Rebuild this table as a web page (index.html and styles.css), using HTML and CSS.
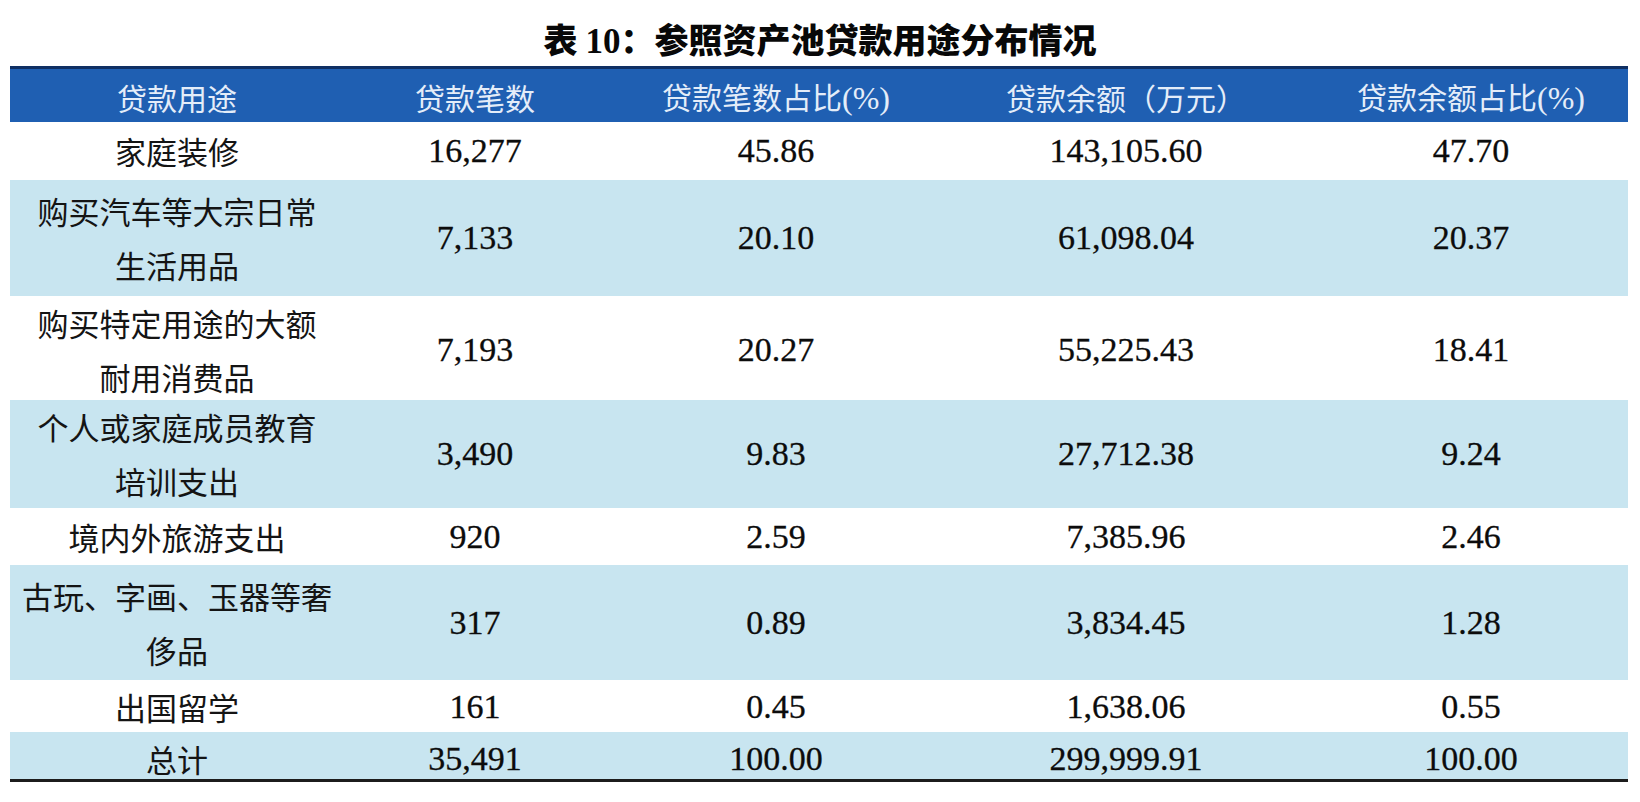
FILE: index.html
```html
<!DOCTYPE html>
<html lang="zh-CN">
<head>
<meta charset="utf-8">
<title>表10：参照资产池贷款用途分布情况</title>
<link rel="stylesheet" href="styles.css">
</head>
<body>
<div class="page">
  <h1 class="title">表 <span class="num">10</span>：参照资产池贷款用途分布情况</h1>
  <div class="table">
    <div class="row head">
      <div class="cell c1">贷款用途</div>
      <div class="cell c2">贷款笔数</div>
      <div class="cell c3">贷款笔数占比<span class="num">(%)</span></div>
      <div class="cell c4">贷款余额（万元）</div>
      <div class="cell c5">贷款余额占比<span class="num">(%)</span></div>
    </div>
    <div class="row r1">
      <div class="cell c1">家庭装修</div>
      <div class="cell c2 num">16,277</div>
      <div class="cell c3 num">45.86</div>
      <div class="cell c4 num">143,105.60</div>
      <div class="cell c5 num">47.70</div>
    </div>
    <div class="row r2 shade">
      <div class="cell c1">购买汽车等大宗日常<br>生活用品</div>
      <div class="cell c2 num">7,133</div>
      <div class="cell c3 num">20.10</div>
      <div class="cell c4 num">61,098.04</div>
      <div class="cell c5 num">20.37</div>
    </div>
    <div class="row r3">
      <div class="cell c1">购买特定用途的大额<br>耐用消费品</div>
      <div class="cell c2 num">7,193</div>
      <div class="cell c3 num">20.27</div>
      <div class="cell c4 num">55,225.43</div>
      <div class="cell c5 num">18.41</div>
    </div>
    <div class="row r4 shade">
      <div class="cell c1">个人或家庭成员教育<br>培训支出</div>
      <div class="cell c2 num">3,490</div>
      <div class="cell c3 num">9.83</div>
      <div class="cell c4 num">27,712.38</div>
      <div class="cell c5 num">9.24</div>
    </div>
    <div class="row r5">
      <div class="cell c1">境内外旅游支出</div>
      <div class="cell c2 num">920</div>
      <div class="cell c3 num">2.59</div>
      <div class="cell c4 num">7,385.96</div>
      <div class="cell c5 num">2.46</div>
    </div>
    <div class="row r6 shade">
      <div class="cell c1">古玩、字画、玉器等奢<br>侈品</div>
      <div class="cell c2 num">317</div>
      <div class="cell c3 num">0.89</div>
      <div class="cell c4 num">3,834.45</div>
      <div class="cell c5 num">1.28</div>
    </div>
    <div class="row r7">
      <div class="cell c1">出国留学</div>
      <div class="cell c2 num">161</div>
      <div class="cell c3 num">0.45</div>
      <div class="cell c4 num">1,638.06</div>
      <div class="cell c5 num">0.55</div>
    </div>
    <div class="row r8 shade total">
      <div class="cell c1">总计</div>
      <div class="cell c2 num">35,491</div>
      <div class="cell c3 num">100.00</div>
      <div class="cell c4 num">299,999.91</div>
      <div class="cell c5 num">100.00</div>
    </div>
  </div>
</div>
</body>
</html>
```

FILE: styles.css
```css
* { box-sizing: border-box; }
html, body {
  margin: 0;
  padding: 0;
  background: #ffffff;
}
body {
  width: 1640px;
  height: 802px;
  overflow: hidden;
  font-family: "Noto Sans CJK SC", "Noto Sans", sans-serif;
  color: #141414;
}
.page {
  padding-top: 14px;
}
.title {
  margin: 0;
  height: 52px;
  line-height: 50px;
  text-align: center;
  font-size: 34px;
  font-weight: 900;
  color: #080808;
}
.title .num {
  font-family: "Liberation Serif", "Noto Serif", serif;
  font-weight: 700;
  font-size: 35px;
}
.table {
  margin: 0 12px 0 10px;
  border-bottom: 3px solid #1c1c1c;
}
.row {
  display: grid;
  grid-template-columns: 346px 238px 364px 336px 1fr;
  align-items: center;
}
.cell {
  text-align: center;
  font-size: 30px;
  line-height: 54px;
  white-space: nowrap;
}
.c1 {
  font-size: 31px;
  padding-right: 12px;
}
.cell.num, .cell .num {
  font-family: "Liberation Serif", "Times New Roman", serif;
  font-size: 34px;
  color: #0c0c0c;
  -webkit-text-stroke: 0.3px #0c0c0c;
}
.c5 { padding-left: 20px; }
.head {
  height: 56px;
  background: #1f5fb2;
  border-top: 3px solid #0f2f63;
  color: #e4edf9;
}
.head .cell {
  font-size: 30px;
  color: #e4edf9;
}
.head .cell .num {
  color: #e4edf9;
  -webkit-text-stroke: 0;
  font-size: 32px;
}
.shade {
  background: #c8e5f0;
}
.r1 { height: 58px; }
.r2 { height: 116px; }
.r3 { height: 104px; }
.r4 { height: 108px; }
.r5 { height: 57px; }
.r6 { height: 115px; }
.r7 { height: 52px; }
.r8 { height: 47px; }
```
